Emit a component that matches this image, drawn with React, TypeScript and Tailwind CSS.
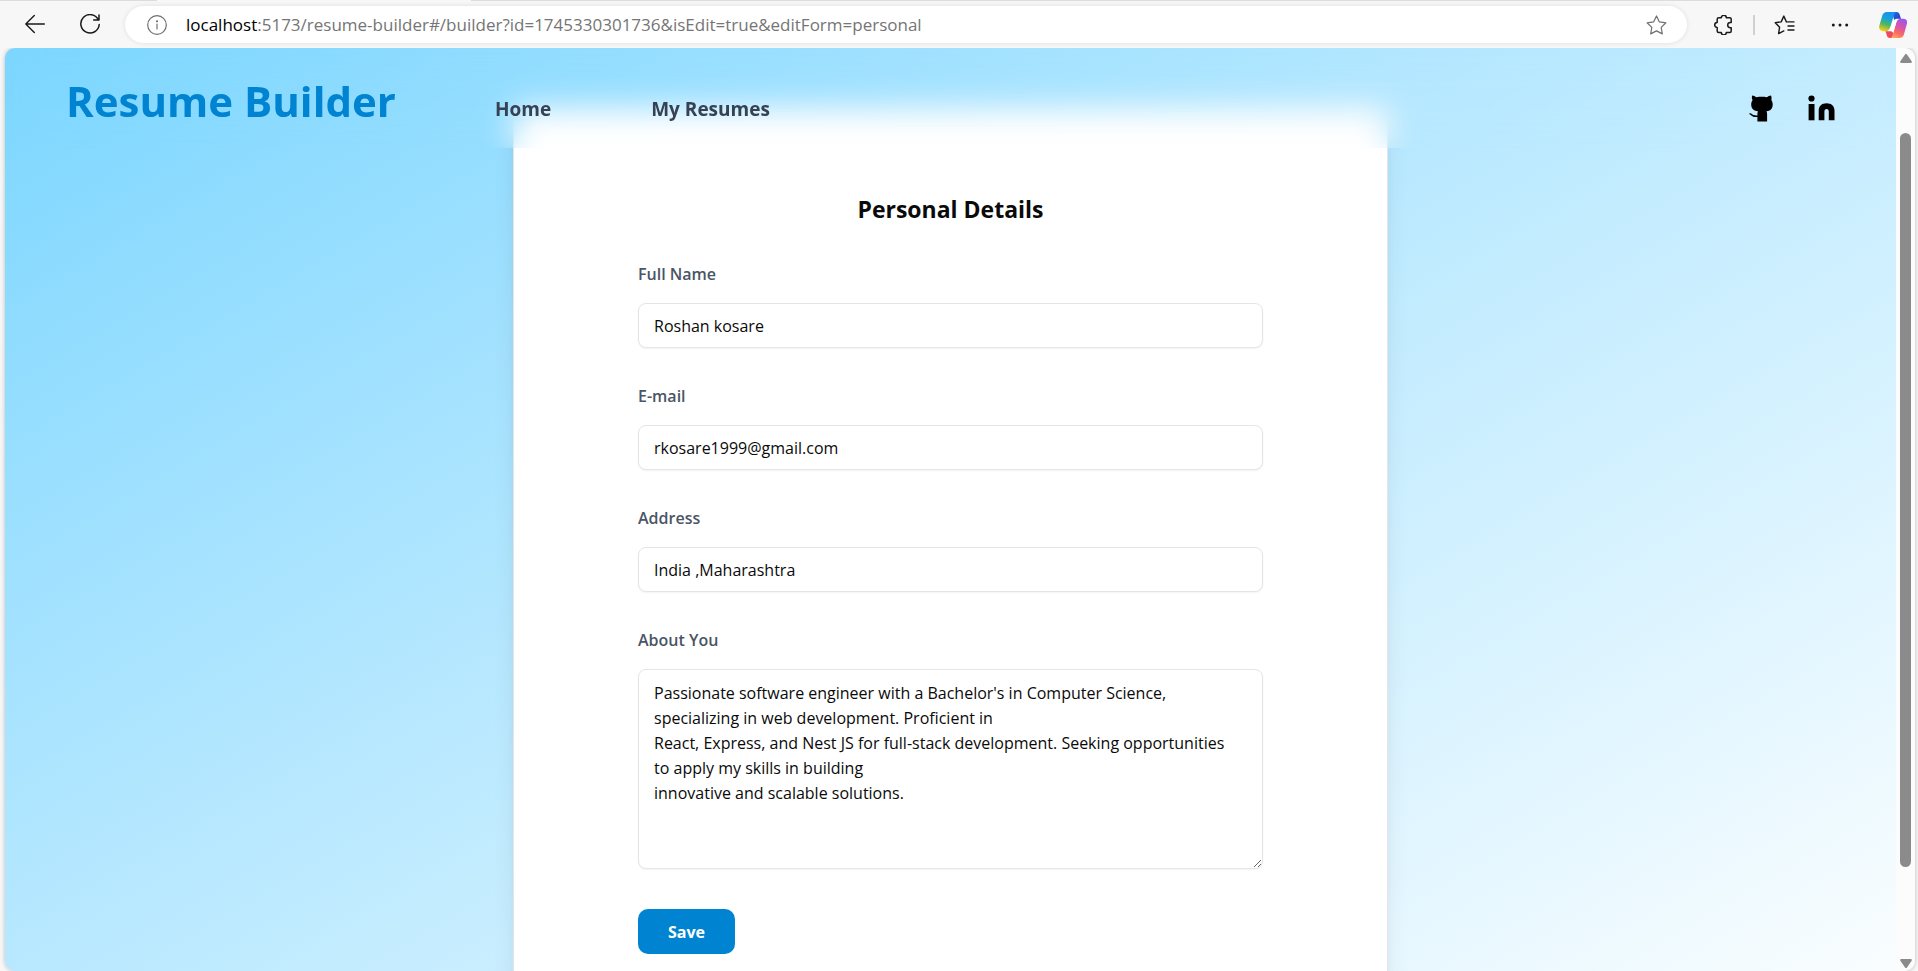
import React, { useState } from "react";

const aboutText = `Passionate software engineer with a Bachelor's in Computer Science, specializing in web development. Proficient in
React, Express, and Nest JS for full-stack development. Seeking opportunities to apply my skills in building
innovative and scalable solutions.`;

function CopilotLogo() {
  return (
    <svg viewBox="0 0 28 26" className="h-[26px] w-7">
      <defs>
        <linearGradient id="cpA" x1="0.6" y1="0" x2="0.3" y2="1">
          <stop offset="0" stopColor="#1a8df0" />
          <stop offset="0.35" stopColor="#15a3dd" />
          <stop offset="0.65" stopColor="#4fb563" />
          <stop offset="1" stopColor="#f7cf13" />
        </linearGradient>
        <linearGradient id="cpB" x1="0.7" y1="0" x2="0.3" y2="1">
          <stop offset="0" stopColor="#9b55f5" />
          <stop offset="0.45" stopColor="#e0559d" />
          <stop offset="0.75" stopColor="#f9705f" />
          <stop offset="1" stopColor="#ffa25c" />
        </linearGradient>
        <linearGradient id="cpC" x1="0" y1="0" x2="1" y2="1">
          <stop offset="0" stopColor="#1b6fe0" />
          <stop offset="1" stopColor="#2338c4" />
        </linearGradient>
      </defs>
      <path d="M13 0h4.500c1.900 0 2.700 1 3.200 2.700l1.300 4.300h-3c-2 0-3 .8-3.500 2.500z" fill="url(#cpC)" />
      <path d="M15.500 26h-4.500c-1.900 0-2.700-1-3.200-2.700l-1.300-4.300h3c2 0 3-.8 3.500-2.500z" fill="#ee4a5c" />
      <path d="M8 0h9.500c-1.400.3-2 1.200-2.500 2.800l-3.800 12.700c-.7 2.400-2 3.700-4.300 3.700H4c-3 0-4.500-2.200-3.700-5.500L3.300 3.500C4 1.200 5.500 0 8 0z" fill="url(#cpA)" />
      <path d="M20.500 26H11c1.400-.3 2-1.200 2.500-2.800l3.800-12.700c.7-2.400 2-3.700 4.300-3.700h2.900c3 0 4.200 2.200 3.300 5.500l-2.900 10.200c-.7 2.300-2 3.500-4.400 3.500z" fill="url(#cpB)" />
      <path d="M15.600 7.500c.6-.5 1.400-.7 2.300-.7h3.700c-2.300 0-3.600 1.300-4.300 3.700l-3.200 10.700c-.2-1.300-1-2-2.400-2H6.900c2.300 0 3.600-1.300 4.300-3.700z" fill="#fff" />
    </svg>
  );
}

function BrowserBar() {
  return (
    <div className="flex h-12 shrink-0 flex-col bg-[#f7f7f7]">
      <div className="flex h-px shrink-0">
        <div className="w-[157px] bg-[#dcdcdc]" />
        <div className="ml-[314px] flex-1 bg-[#dcdcdc]" />
      </div>
      <div className="flex h-[47px] items-start pr-[11px]">
        <div className="flex h-[45px] w-[125px] shrink-0 items-center pl-[25px]">
          <button aria-label="Back" className="flex w-[55px]">
            <svg viewBox="0 0 20 20" className="size-5" fill="none" stroke="#1a1a1a" strokeWidth="1.400" strokeLinecap="round" strokeLinejoin="round">
              <path d="M19.300 10H.8M9.300 1.500L.8 10l8.500 8.500" />
            </svg>
          </button>
          <button aria-label="Refresh">
            <svg viewBox="0 0 20 20" className="size-5" fill="none" stroke="#1a1a1a" strokeWidth="1.500" strokeLinecap="round" strokeLinejoin="round">
              <path d="M18.400 6A9.200 9.200 0 1 0 19.200 10.500M19 .9V6h-5.300" />
            </svg>
          </button>
        </div>
        <div className="mt-[5px] flex h-[37px] min-w-0 flex-1 items-center rounded-full bg-white pr-5 pl-[22px] shadow-[0_0_5px_rgba(0,0,0,0.1)]">
          <button aria-label="Site information">
            <svg viewBox="0 0 20 20" className="size-5" fill="none" stroke="#707070" strokeWidth="1.200" strokeLinecap="round">
              <circle cx="10" cy="10" r="9.300" />
              <path d="M10 9v5" />
              <circle cx="10" cy="6.300" r=".5" fill="#707070" />
            </svg>
          </button>
          <p className="min-w-0 flex-1 truncate pl-[19px] text-[17px] leading-6 text-[#757575]">
            <span className="text-black">localhost</span>:5173/resume-builder#/builder?id=1745330301736&amp;isEdit=true&amp;editForm=personal
          </p>
          <button aria-label="Add to favorites">
            <svg viewBox="0 0 21 20" className="h-5 w-[21px]" fill="none" stroke="#707070" strokeWidth="1.200" strokeLinejoin="round">
              <path d="M10.500 1l2.900 5.900 6.500.9-4.700 4.600 1.100 6.500-5.800-3-5.800 3 1.100-6.500L1.100 7.800l6.500-.9z" />
            </svg>
          </button>
        </div>
        <div className="flex h-[47px] shrink-0 items-center">
          <button aria-label="Extensions" className="ml-[27px]">
            <svg viewBox="0 0 19 20" className="h-5 w-[19px]" fill="none" stroke="#1a1a1a" strokeWidth="1.500" strokeLinejoin="round">
              <path d="M7.300 2.700a2.500 2.500 0 0 1 5 0h3.400c.9 0 1.500.6 1.500 1.500v3.200h-.8a2.700 2.700 0 0 0 0 5.400h.8v3.100c0 .9-.6 1.500-1.500 1.500h-3.400a2.500 2.500 0 0 1-5 0H4.700c-.9 0-1.500-.6-1.500-1.500v-3.400a2.500 2.500 0 0 1 0-5V4.200c0-.9.6-1.500 1.500-1.500z" />
            </svg>
          </button>
          <span className="ml-5 h-5 w-0.5 bg-[#d0d0d0]" />
          <button aria-label="Favorites" className="ml-[19px]">
            <svg viewBox="0 0 21 20" className="h-5 w-[21px]" fill="none" stroke="#1a1a1a" strokeWidth="1.400" strokeLinecap="round" strokeLinejoin="round">
              <path d="M13.500 6.900h6.500M14 11h6M14 15h6M12.400 6.900L9.800 1.100 7.200 6.900l-6 .8 4.400 4.500-1 6.400 5.200-2.700" />
            </svg>
          </button>
          <button aria-label="Settings and more" className="ml-9">
            <svg viewBox="0 0 18 4" className="h-1 w-[18px]" fill="#1a1a1a">
              <circle cx="2.300" cy="2" r="1.500" />
              <circle cx="9" cy="2" r="1.500" />
              <circle cx="15.700" cy="2" r="1.500" />
            </svg>
          </button>
          <button aria-label="Copilot" className="ml-[30px]">
            <CopilotLogo />
          </button>
        </div>
      </div>
    </div>
  );
}

function GithubIcon() {
  return (
    <svg viewBox="0 0 24 27" className="h-[27px] w-6" fill="#000">
      <path d="M3.200.4C4.600.5 6.200 1.200 7.500 2.300c1.600-.4 3.400-.5 5.100-.5s3.500.1 5.100.5C19 1.200 20.600.5 22 .4c.7 1.600.7 3.300.3 4.700.9 1.200 1.400 2.700 1.400 4.500 0 4.500-2.600 6.300-6.300 6.900.5.6.7 1.300.7 2.200v7.900H8.400v-4.500H7C4.400 22 2.900 21 1.700 19.900L.3 19l.5-1.100 1.700.9c1.500 1.200 3 1.900 5.900 1.700v-1.800c0-.9.2-1.600.7-2.200-3.800-.6-6.900-2.400-6.900-6.900 0-1.800.6-3.300 1.400-4.500-.9-1.400-.9-3.100-.4-4.700z" />
    </svg>
  );
}

function LinkedinIcon() {
  return (
    <svg viewBox="0 0 27 26" className="h-[26px] w-[27px]" fill="#000">
      <circle cx="3.500" cy="3.500" r="3.100" />
      <path d="M.6 9h5.900v16.300H.6z" />
      <path d="M10.700 25.300V15.600c0-4.600 3.200-7.300 7.900-7.300s7.900 2.700 7.900 7.300v9.700h-5.700v-8.900c0-1.600-.8-2.500-2.200-2.500s-2.200.9-2.200 2.500v8.900z" />
    </svg>
  );
}

function SiteHeader() {
  return (
    <header className="sticky top-0 z-10 flex h-[100px] items-start pr-[61px] pl-[61px] backdrop-blur-lg">
      <h1 className="w-[429px] pt-5 text-[42px] leading-[66px] font-bold text-[#0084d1]">Resume Builder</h1>
      <nav className="flex flex-1 gap-[100px] pt-[47px] text-[19px] leading-7 font-bold text-[#364153]">
        <a href="#home">Home</a>
        <a href="#resumes">My Resumes</a>
      </nav>
      <div className="flex gap-[35px] pt-[47px]">
        <a href="#github" aria-label="GitHub">
          <GithubIcon />
        </a>
        <a href="#linkedin" aria-label="LinkedIn">
          <LinkedinIcon />
        </a>
      </div>
    </header>
  );
}

const fieldClass =
  "block w-full rounded-lg border border-[#e3e5e8] bg-white pl-[15px] text-[16px] leading-[25px] text-[#0a0a0a] shadow-xs outline-none";
const labelClass = "block text-[16px] leading-[25px] font-semibold text-[#4a5565]";

function TextField({ id, label, initial }: { id: string; label: string; initial: string }) {
  const [value, setValue] = useState(initial);
  return (
    <div className="flex flex-col gap-4">
      <label htmlFor={id} className={labelClass}>
        {label}
      </label>
      <input id={id} value={value} onChange={(e) => setValue(e.target.value)} className={`${fieldClass} h-[45px] pr-4`} />
    </div>
  );
}

function Scrollbar() {
  return (
    <div className="flex w-[19px] shrink-0 flex-col items-center rounded-r-[10px] bg-[#fcfcfc] pt-1.5 pb-[3px]">
      <svg viewBox="0 0 12 9" className="h-[9px] w-3" fill="#8b8b8b">
        <path d="M5 .6a1.200 1.200 0 0 1 2 0L11.800 7.500Q12 9 10.800 9H1.200Q0 9 .2 7.500z" />
      </svg>
      <div className="flex w-full flex-1 flex-col items-center pt-[70px] pb-[92px]">
        <div className="w-[11px] flex-1 rounded-full bg-[#8b8b8b]" />
      </div>
      <svg viewBox="0 0 12 9" className="h-[9px] w-3 rotate-180" fill="#8b8b8b">
        <path d="M5 .6a1.200 1.200 0 0 1 2 0L11.800 7.500Q12 9 10.800 9H1.200Q0 9 .2 7.500z" />
      </svg>
    </div>
  );
}

export default function App() {
  const [about, setAbout] = useState(aboutText);
  return (
    <div className="flex h-screen flex-col overflow-hidden bg-[#f7f7f7] font-['Open_Sans','Noto_Sans',sans-serif]">
      <BrowserBar />
      <div className="flex min-h-0 flex-1 overflow-hidden pr-[3px] pl-[5px]">
        <div className="flex min-w-0 flex-1 overflow-hidden rounded-[10px] shadow-[0_0_4px_rgba(0,0,0,0.25)]">
          <div className="min-w-0 flex-1 overflow-hidden bg-linear-to-br from-[#74d4ff] to-white bg-[length:100%_121%] bg-[position:0_47%]">
            <SiteHeader />
            <main className="mx-auto -mt-10 max-w-[875px] border border-[#e3e5e8] bg-white px-[124px] pt-[82px] pb-16 shadow-xl">
              <h2 className="text-center text-[23px] leading-9 font-bold text-[#0a0a0a]">Personal Details</h2>
              <form className="mt-[35px] flex flex-col gap-9" onSubmit={(e) => e.preventDefault()}>
                <TextField id="fullName" label="Full Name" initial="Roshan kosare" />
                <TextField id="email" label="E-mail" initial="rkosare1999@gmail.com" />
                <TextField id="address" label="Address" initial="India ,Maharashtra" />
                <div className="flex flex-col gap-4">
                  <label htmlFor="about" className={labelClass}>
                    About You
                  </label>
                  <textarea
                    id="about"
                    value={about}
                    onChange={(e) => setAbout(e.target.value)}
                    className={`${fieldClass} h-[200px] resize py-[11px] pr-6`}
                  />
                </div>
                <button type="submit" className="mt-1 h-[45px] w-[97px] rounded-[10px] bg-[#0084d1] text-[16px] leading-6 font-bold text-white">
                  Save
                </button>
              </form>
            </main>
          </div>
          <Scrollbar />
        </div>
      </div>
    </div>
  );
}
